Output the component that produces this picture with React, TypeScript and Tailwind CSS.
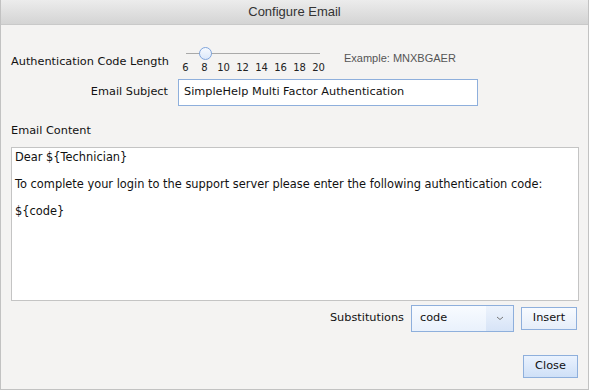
const TICKS = [6, 8, 10, 12, 14, 16, 18, 20];

const ui = { fontFamily: '"DejaVu Sans", "Noto Sans", sans-serif' };
const arial = { fontFamily: '"Liberation Sans", Arial, sans-serif' };

function Slider() {
  return (
    <div className="relative w-[160px] h-[30px]">
      {/* track */}
      <div className="absolute left-[8px] top-[8px] w-[134px] h-px bg-[#a9a9a9]" />
      {/* thumb */}
      <div className="absolute left-[21px] top-[2px] w-[13px] h-[13px] rounded-full border border-[#7fa4dc] bg-gradient-to-b from-[#f6f9fe] to-[#dce8fa]" />
      <div className="absolute left-[-2px] top-[15px] flex text-[10px] text-[#222]" style={ui}>
        {TICKS.map((t) => (
          <span key={t} className="w-[19px] text-center">{t}</span>
        ))}
      </div>
    </div>
  );
}

export default function App() {
  return (
    <div className="w-[589px] h-[390px] bg-[#f4f3f2] border-l border-r border-b border-[#c2c2c2] flex flex-col text-[11.3px] text-[#111]" style={ui}>
      {/* Title bar */}
      <div className="h-[25px] flex items-center justify-center bg-gradient-to-b from-[#ececec] to-[#d4d4d4] border-b border-[#c9c9c9] text-[13px] text-[#333]" style={arial}>
        Configure Email
      </div>

      <div className="flex-1 flex flex-col px-[10px]">
        {/* Code length row */}
        <div className="flex items-start mt-[20px] h-[36px]">
          <div className="w-[157px] text-right pt-[9px] whitespace-nowrap">Authentication Code Length</div>
          <div className="ml-[10px]"><Slider /></div>
          <div className="ml-[6px] pt-[5px] text-[11px] text-[#555]" style={arial}>Example: MNXBGAER</div>
        </div>

        {/* Subject row */}
        <div className="flex items-center mt-[-2px]">
          <div className="w-[157px] text-right">Email Subject</div>
          <div className="ml-[10px] w-[300px] h-[27px] bg-white border border-[#8eafdc] flex items-center px-[5px]">
            SimpleHelp Multi Factor Authentication
          </div>
        </div>

        <div className="mt-[15px] h-[26px] leading-[20px]">Email Content</div>

        {/* Content area */}
        <div className="w-[568px] h-[154px] bg-white border border-[#c4c4c4] px-[3px] pt-[3px] text-[11.4px] leading-[13.5px] whitespace-pre-wrap">
{`Dear \${Technician}

To complete your login to the support server please enter the following authentication code:

\${code}`}
        </div>

        {/* Substitutions row */}
        <div className="flex items-center justify-end mt-[4px] pr-[1px]">
          <span className="mr-[7px]">Substitutions</span>
          <div className="w-[103px] h-[27px] border border-[#8eafdc] flex bg-gradient-to-b from-[#f8fbff] to-[#e9f1fc]">
            <span className="flex-1 flex items-center pl-[8px]">code</span>
            <span className="w-[27px] flex items-center justify-center bg-gradient-to-b from-[#edf3fc] to-[#d7e4f7]">
              <svg width="8" height="5" viewBox="0 0 8 5"><path d="M1 1 L4 3.5 L7 1" fill="none" stroke="#777" strokeWidth="1" /></svg>
            </span>
          </div>
          <button className="ml-[7px] w-[56px] h-[23px] border border-[#8eafdc] bg-gradient-to-b from-[#f8fbff] to-[#e6eef9] flex items-center justify-center">Insert</button>
        </div>

        <div className="flex-1 flex items-end justify-end pb-[11px]">
          <button className="w-[55px] h-[23px] border border-[#8eafdc] bg-gradient-to-b from-[#eaf2fe] to-[#cfe0f7] flex items-center justify-center">Close</button>
        </div>
      </div>
    </div>
  );
}
